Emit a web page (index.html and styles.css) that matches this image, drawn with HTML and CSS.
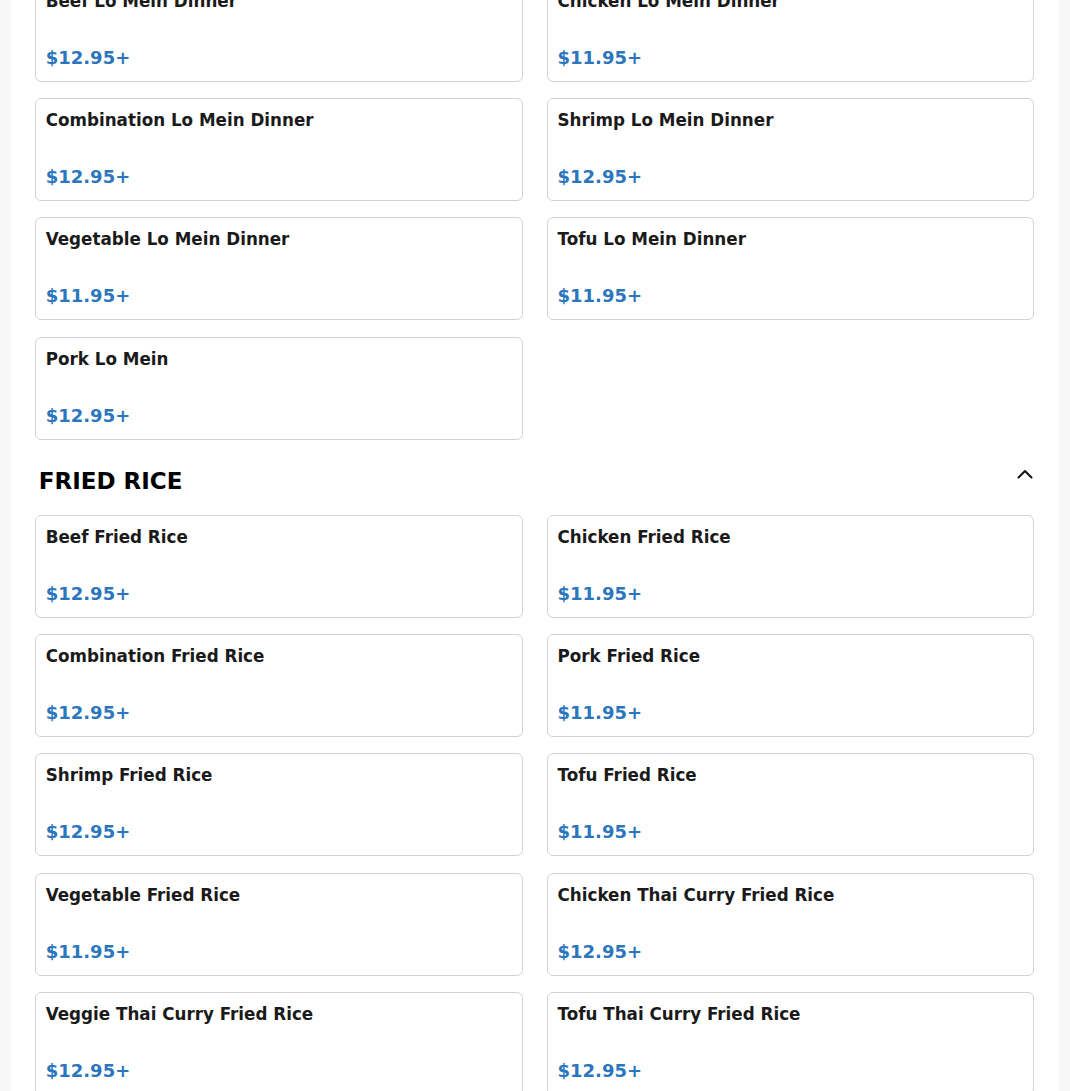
FILE: index.html
```html
<!DOCTYPE html>
<html lang="en">
<head>
<meta charset="utf-8">
<title>Menu</title>
<link rel="stylesheet" href="styles.css">
</head>
<body>
<main class="menu">
  <section class="section section-first">
    <div class="grid">
      <div class="card"><div class="item-name">Beef Lo Mein Dinner</div><div class="item-price">$12.95+</div></div>
      <div class="card"><div class="item-name">Chicken Lo Mein Dinner</div><div class="item-price">$11.95+</div></div>
      <div class="card"><div class="item-name">Combination Lo Mein Dinner</div><div class="item-price">$12.95+</div></div>
      <div class="card"><div class="item-name">Shrimp Lo Mein Dinner</div><div class="item-price">$12.95+</div></div>
      <div class="card"><div class="item-name">Vegetable Lo Mein Dinner</div><div class="item-price">$11.95+</div></div>
      <div class="card"><div class="item-name">Tofu Lo Mein Dinner</div><div class="item-price">$11.95+</div></div>
      <div class="card"><div class="item-name">Pork Lo Mein</div><div class="item-price">$12.95+</div></div>
    </div>
  </section>
  <section class="section">
    <div class="section-header">
      <h2 class="section-title">FRIED RICE</h2>
      <svg class="chevron" width="16" height="10" viewBox="0 0 16 10" aria-hidden="true"><polyline points="1.5,8.5 8,2 14.5,8.5" fill="none" stroke="#111" stroke-width="2" stroke-linecap="round" stroke-linejoin="round"/></svg>
    </div>
    <div class="grid">
      <div class="card"><div class="item-name">Beef Fried Rice</div><div class="item-price">$12.95+</div></div>
      <div class="card"><div class="item-name">Chicken Fried Rice</div><div class="item-price">$11.95+</div></div>
      <div class="card"><div class="item-name">Combination Fried Rice</div><div class="item-price">$12.95+</div></div>
      <div class="card"><div class="item-name">Pork Fried Rice</div><div class="item-price">$11.95+</div></div>
      <div class="card"><div class="item-name">Shrimp Fried Rice</div><div class="item-price">$12.95+</div></div>
      <div class="card"><div class="item-name">Tofu Fried Rice</div><div class="item-price">$11.95+</div></div>
      <div class="card"><div class="item-name">Vegetable Fried Rice</div><div class="item-price">$11.95+</div></div>
      <div class="card"><div class="item-name">Chicken Thai Curry Fried Rice</div><div class="item-price">$12.95+</div></div>
      <div class="card"><div class="item-name">Veggie Thai Curry Fried Rice</div><div class="item-price">$12.95+</div></div>
      <div class="card"><div class="item-name">Tofu Thai Curry Fried Rice</div><div class="item-price">$12.95+</div></div>
    </div>
  </section>
</main>
</body>
</html>
```
FILE: styles.css
```css
html, body {
  margin: 0;
  padding: 0;
}
body {
  background: #f7f7f7;
  font-family: "DejaVu Sans", "Liberation Sans", sans-serif;
  color: #1a1a1a;
}
.menu {
  width: 98%;
  margin: 0 auto;
  background: #ffffff;
  padding: 0 25px 40px 24px;
  box-sizing: border-box;
}
.section-first {
  margin-top: -21.5px;
}
.grid {
  display: grid;
  grid-template-columns: 1fr 1fr;
  column-gap: 24px;
  row-gap: 16.4px;
}
.card {
  height: 103px;
  box-sizing: border-box;
  border: 1px solid #d3d3d3;
  border-radius: 6px;
  padding: 10px;
  display: flex;
  flex-direction: column;
  justify-content: space-between;
  background: #fff;
}
.item-name {
  font-size: 16.75px;
  font-weight: bold;
  line-height: 22px;
  color: #1a1a1a;
}
.item-price {
  font-size: 18px;
  font-weight: bold;
  line-height: 27px;
  color: #2b76bc;
}
.section-header {
  display: flex;
  justify-content: space-between;
  align-items: flex-start;
  margin: 27px 0 20px;
  padding-left: 4px;
}
.section-title {
  margin: 0;
  font-size: 23px;
  line-height: 28px;
  font-weight: bold;
  color: #000;
}
.chevron {
  display: block;
  margin-top: 2px;
  margin-right: 1px;
}
```
